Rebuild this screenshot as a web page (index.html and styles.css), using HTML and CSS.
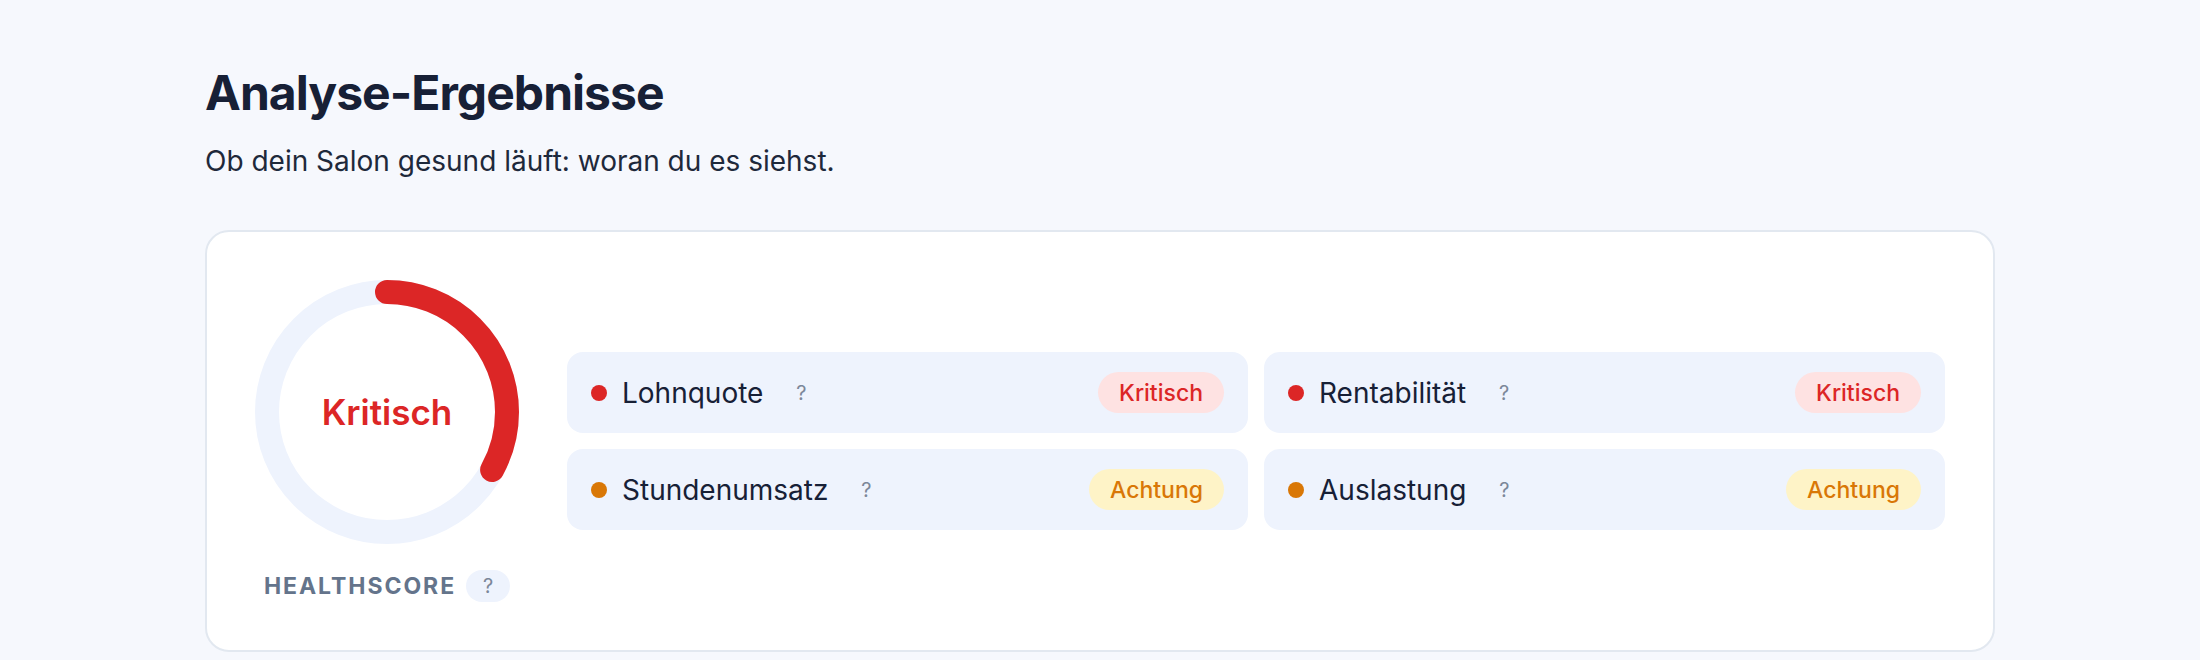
FILE: index.html
```html
<!DOCTYPE html>
<html lang="de">
<head>
    <meta charset="UTF-8">
    <meta name="viewport" content="width=device-width, initial-scale=1.0">
    <title>Analyse-Ergebnisse</title>
    <link rel="stylesheet" href="styles.css">
</head>
<body>
    <main class="page">
        <h1 class="title">Analyse-Ergebnisse</h1>
        <p class="subtitle">Ob dein Salon gesund läuft: woran du es siehst.</p>

        <section class="card">
            <div class="score">
                <div class="gauge">
                    <svg width="264" height="264" viewBox="0 0 264 264">
                        <circle class="gauge-track" cx="132" cy="132" r="120"></circle>
                        <!-- Umfang 2*pi*120 = 753.98, Score 33% -->
                        <circle class="gauge-value" cx="132" cy="132" r="120"
                                stroke-dasharray="248.8 753.98" transform="rotate(-90 132 132)"></circle>
                    </svg>
                    <div class="gauge-label">Kritisch</div>
                </div>
                <div class="score-caption">
                    <span>HEALTHSCORE</span>
                    <button type="button" class="help help-pill">?</button>
                </div>
            </div>

            <div class="metrics">
                <div class="metric">
                    <span class="dot dot-red"></span>
                    <span class="metric-name">Lohnquote</span>
                    <button type="button" class="help">?</button>
                    <span class="badge badge-red">Kritisch</span>
                </div>
                <div class="metric">
                    <span class="dot dot-red"></span>
                    <span class="metric-name">Rentabilität</span>
                    <button type="button" class="help">?</button>
                    <span class="badge badge-red">Kritisch</span>
                </div>
                <div class="metric">
                    <span class="dot dot-orange"></span>
                    <span class="metric-name">Stundenumsatz</span>
                    <button type="button" class="help">?</button>
                    <span class="badge badge-orange">Achtung</span>
                </div>
                <div class="metric">
                    <span class="dot dot-orange"></span>
                    <span class="metric-name">Auslastung</span>
                    <button type="button" class="help">?</button>
                    <span class="badge badge-orange">Achtung</span>
                </div>
            </div>
        </section>
    </main>
</body>
</html>
```

FILE: styles.css
```css
* {
    margin: 0;
    padding: 0;
    box-sizing: border-box;
    font-family: Inter, "Noto Sans", sans-serif;
}
body {
    background: #f6f8fd;
    color: #172036;
}
.page {
    max-width: 1790px;
    margin: 0 auto;
    padding-top: 64px;
}
.title {
    font-size: 48px;
    font-weight: 700;
    line-height: 1.21;
    letter-spacing: -0.02em;
}
.subtitle {
    margin-top: 18px;
    font-size: 28px;
    line-height: 1.5;
    color: #1e293b;
}
.card {
    margin-top: 48px;
    background: #fff;
    border: 2px solid #e2e8f0;
    border-radius: 24px;
    padding: 48px;
    display: flex;
    align-items: center;
    gap: 48px;
}
.score {
    display: flex;
    flex-direction: column;
    align-items: center;
    gap: 26px;
}
.gauge {
    display: grid;
    place-items: center;
}
.gauge svg,
.gauge-label {
    grid-area: 1 / 1;
}
.gauge svg {
    display: block;
}
.gauge-track,
.gauge-value {
    fill: none;
    stroke-width: 24;
}
.gauge-track {
    stroke: #eef3fd;
}
.gauge-value {
    stroke: #dc2626;
    stroke-linecap: round;
}
.gauge-label {
    font-size: 35px;
    font-weight: 600;
    color: #dc2626;
}
.score-caption {
    display: flex;
    align-items: center;
    gap: 10px;
    font-size: 23px;
    font-weight: 700;
    letter-spacing: 0.085em;
    color: #64748b;
}
.help {
    border: none;
    background: transparent;
    color: #7c8799;
    font-size: 20px;
    width: 44px;
    height: 32px;
    border-radius: 16px;
    cursor: pointer;
}
.help-pill {
    background: #eef3fd;
    letter-spacing: 0;
}
.metrics {
    flex: 1;
    display: grid;
    grid-template-columns: 1fr 1fr;
    gap: 16px;
}
.metric {
    display: flex;
    align-items: center;
    height: 81px;
    padding: 0 24px;
    background: #eef3fd;
    border-radius: 16px;
}
.dot {
    width: 16px;
    height: 16px;
    border-radius: 50%;
    margin-right: 15px;
}
.dot-red {
    background: #dc2626;
}
.dot-orange {
    background: #d97706;
}
.metric-name {
    font-size: 28px;
    color: #172036;
}
.metric .help {
    margin-left: 16px;
}
.badge {
    margin-left: auto;
    height: 41px;
    padding: 0 21px;
    border-radius: 21px;
    display: flex;
    align-items: center;
    font-size: 23px;
    font-weight: 500;
}
.badge-red {
    background: #fee2e2;
    color: #dc2626;
}
.badge-orange {
    background: #fef3c7;
    color: #d97706;
}
```
